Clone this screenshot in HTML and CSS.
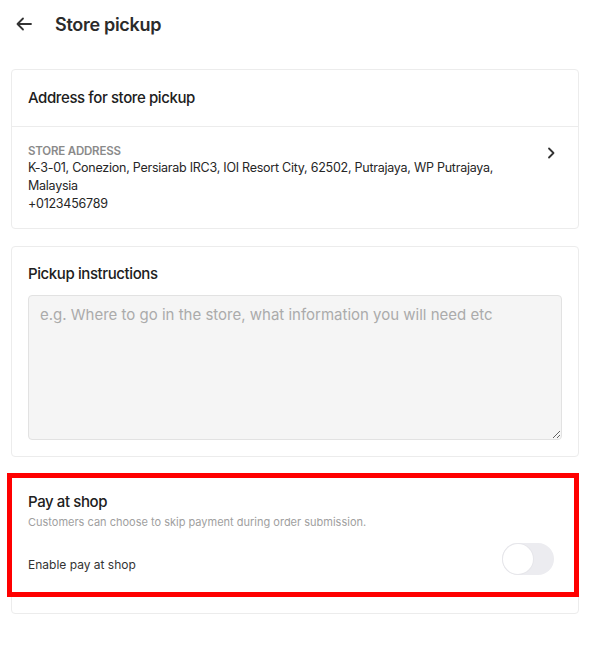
FILE: index.html
```html
<!DOCTYPE html>
<html>

<head>
    <link rel="stylesheet" href="styles.css">
</head>

<body>
    <div class="topbar">
        <svg class="back" width="16" height="14" viewBox="0 0 16 14" fill="none" stroke="#333" stroke-width="1.8" stroke-linecap="round" stroke-linejoin="round">
            <path d="M15 7H1.5M7 1.5L1.5 7L7 12.5" />
        </svg>
        <h1>Store pickup</h1>
    </div>

    <div class="page">
        <!-- Address -->
        <div class="card">
            <div class="card-head">Address for store pickup</div>
            <div class="card-body address-row">
                <div class="address">
                    <div class="label">STORE ADDRESS</div>
                    <div>K-3-01, Conezion, Persiarab IRC3, IOI Resort City, 62502, Putrajaya, WP Putrajaya, Malaysia</div>
                    <div>+0123456789</div>
                </div>
                <svg class="chevron" width="8" height="12" viewBox="0 0 8 12" fill="none" stroke="#333" stroke-width="1.8" stroke-linecap="round" stroke-linejoin="round">
                    <path d="M2 1.5L6.5 6L2 10.5" />
                </svg>
            </div>
        </div>

        <!-- Instructions -->
        <div class="card padded">
            <div class="title">Pickup instructions</div>
            <textarea class="notes" placeholder="e.g. Where to go in the store, what information you will need etc"></textarea>
        </div>

        <!-- Pay at shop -->
        <div class="card padded pay">
            <div class="title">Pay at shop</div>
            <div class="desc">Customers can choose to skip payment during order submission.</div>
            <div class="switch-row">
                <span>Enable pay at shop</span>
                <span class="switch"><span class="knob"></span></span>
            </div>
            <div class="highlight"></div>
        </div>
    </div>
</body>

</html>
```

FILE: styles.css
```css
body {
    font-family: Inter, "Noto Sans", sans-serif;
    margin: 0;
    color: #202020;
    background: #fff;
}

.topbar {
    display: flex;
    align-items: center;
    height: 48px;
    padding: 0 16px;
}

.topbar h1 {
    font-size: 18px;
    font-weight: 600;
    margin: 0 0 0 23px;
    letter-spacing: -0.3px;
    color: #2b2b2b;
}

.back {
    display: block;
}

.page {
    display: flex;
    flex-direction: column;
    gap: 17px;
    padding: 21px 11px 40px;
}

.card {
    border: 1px solid #ececec;
    border-radius: 4px;
    background: #fff;
}

.card.padded {
    padding: 16px;
}

.card-head {
    padding: 18px 16px;
    font-size: 15px;
    font-weight: 550;
    line-height: 20px;
    border-bottom: 1px solid #ececec;
    letter-spacing: -0.4px;
}

.card-body {
    padding: 16px 16px 15px;
}

.address-row {
    display: flex;
    align-items: flex-start;
    gap: 20px;
}

.address {
    flex: 1;
    font-size: 12.5px;
    line-height: 18px;
    padding-right: 20px;
    letter-spacing: -0.25px;
    color: #262626;
}

.address .label {
    font-size: 11.5px;
    font-weight: 600;
    color: #8a8a8a;
    line-height: 16px;
    letter-spacing: -0.2px;
}

.chevron {
    margin: 4px 7px 0 0;
}

.title {
    font-size: 15px;
    font-weight: 550;
    line-height: 22px;
    letter-spacing: -0.4px;
}

.notes {
    display: block;
    box-sizing: border-box;
    width: 100%;
    height: 145px;
    margin-top: 10px;
    padding: 8px 11px;
    background: #f5f5f5;
    border: 1px solid #e2e2e2;
    border-radius: 4px;
    font-family: Inter, "Noto Sans", sans-serif;
    font-size: 15px;
    line-height: 22px;
    color: #333;
}

.notes::placeholder {
    color: #ababab;
}

.card.pay {
    position: relative;
    padding-bottom: 38px;
}

.desc {
    font-size: 11px;
    line-height: 18px;
    color: #a0a0a0;
}

.switch-row {
    display: flex;
    justify-content: space-between;
    align-items: flex-end;
    margin-top: 12px;
    font-size: 12px;
    line-height: 20px;
    color: #333;
}

.switch {
    width: 52px;
    height: 32px;
    border-radius: 16px;
    background: #ececf0;
    box-sizing: border-box;
    padding: 1px;
    margin-right: 8px;
}

.knob {
    display: block;
    width: 30px;
    height: 30px;
    border-radius: 50%;
    background: #fff;
    box-shadow: 0 0 0 1px #e6e6ea;
}

.highlight {
    position: absolute;
    top: -2px;
    left: -5px;
    right: -1px;
    height: 124px;
    box-sizing: border-box;
    border: 5px solid #f00;
    pointer-events: none;
}
```
